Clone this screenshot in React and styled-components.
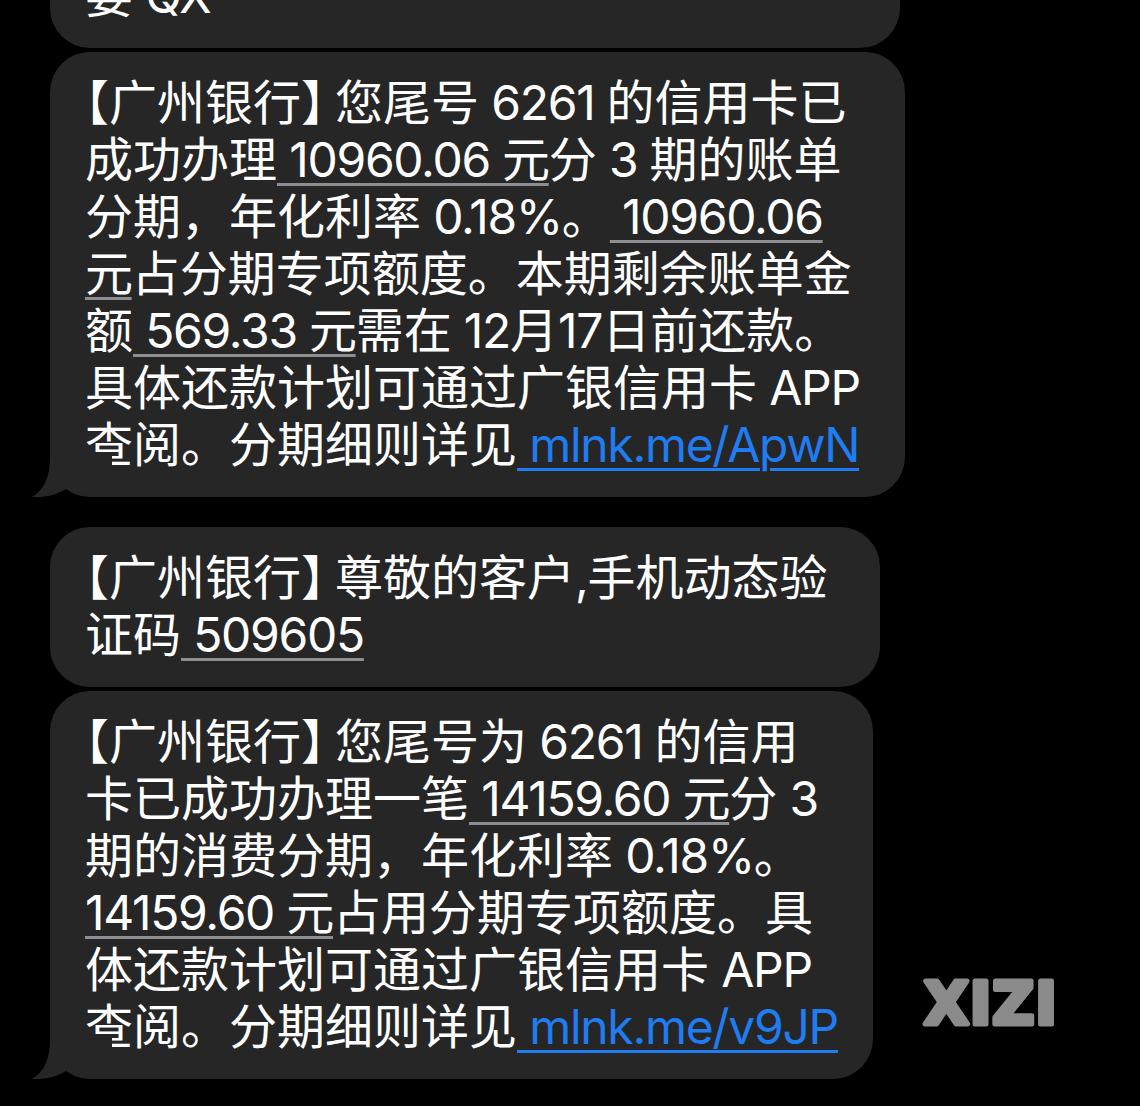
import React from "react";
import styled, { createGlobalStyle } from "styled-components";

const GlobalStyle = createGlobalStyle`
  html, body {
    margin: 0;
    padding: 0;
    background: #000000;
  }
  body {
    overflow: hidden;
  }
`;

const Screen = styled.div`
  position: relative;
  width: 1140px;
  height: 1106px;
  overflow: hidden;
  background: #000000;
  font-family: "Inter", "Noto Sans CJK SC", sans-serif;
`;

const Thread = styled.div`
  display: flex;
  flex-direction: column;
  align-items: flex-start;
  padding-left: 50px;
  margin-top: -55px;
`;

const Bubble = styled.div`
  position: relative;
  box-sizing: border-box;
  width: ${(p) => p.$width}px;
  margin-top: ${(p) => p.$gap || 0}px;
  padding: 22px 20px 24px 35px;
  background: #262626;
  border-radius: 40px;
  color: #ffffff;
  font-size: 48px;
  line-height: 57px;
  white-space: nowrap;
`;

const Tail = styled.svg`
  position: absolute;
  left: -18px;
  bottom: 0;
  width: 80px;
  height: 45px;
`;

const Bracket = styled.span`
  font-family: "Noto Sans CJK SC", sans-serif;
  font-feature-settings: "halt";
  line-height: 1;
  margin-right: ${(p) => p.$after || 0}px;
`;

// latin runs are a touch narrower than Inter's default
const L = styled.span`
  letter-spacing: -1.3px;
`;

const Data = styled(L)`
  text-decoration: underline;
  text-decoration-color: #8d8d92;
  text-decoration-thickness: 3px;
  text-underline-offset: 6px;
`;

const Link = styled(L)`
  color: #1f7cf1;
  text-decoration: underline;
  text-decoration-color: #1f7cf1;
  text-decoration-thickness: 3px;
  text-underline-offset: 6px;
`;

const Watermark = styled.svg`
  position: absolute;
  left: 918px;
  top: 970px;
  width: 150px;
  height: 64px;
`;

const Head = () => (
  <>
    <Bracket>【</Bracket>广州银行<Bracket $after={10}>】</Bracket>
  </>
);

const BubbleTail = () => (
  <Tail viewBox="0 0 80 45">
    <path
      d="M18 0 L18 5 C18 25 12 38 0 45 C14 46 26 42 34 37 C44 43 58 45 80 45 L80 0 Z"
      fill="#262626"
    />
  </Tail>
);

const App = () => {
  return (
    <Screen>
      <GlobalStyle />
      <Thread>
        <Bubble $width={850}>
          要<L> QX</L>
        </Bubble>

        <Bubble $width={855} $gap={4}>
          <Head />您尾号<L> 6261 </L>的信用卡已
          <br />
          成功办理<Data> 10960.06 元</Data>分<L> 3 </L>期的账单
          <br />
          分期，年化利率<L> 0.18%</L>。<Data> 10960.06</Data>
          <br />
          <Data>元</Data>占分期专项额度。本期剩余账单金
          <br />
          额<Data> 569.33 元</Data>需在<L> 12</L>月<L>17</L>日前还款。
          <br />
          具体还款计划可通过广银信用卡<L> APP</L>
          <br />
          查阅。分期细则详见<Link> mlnk.me/ApwN</Link>
          <BubbleTail />
        </Bubble>

        <Bubble $width={830} $gap={30}>
          <Head />尊敬的客户<L>,</L>手机动态验
          <br />
          证码<Data> 509605</Data>
        </Bubble>

        <Bubble $width={823} $gap={4}>
          <Head />您尾号为<L> 6261 </L>的信用
          <br />
          卡已成功办理一笔<Data> 14159.60 元</Data>分<L> 3</L>
          <br />
          期的消费分期，年化利率<L> 0.18%</L>。
          <br />
          <Data>14159.60 元</Data>占用分期专项额度。具
          <br />
          体还款计划可通过广银信用卡<L> APP</L>
          <br />
          查阅。分期细则详见<Link> mlnk.me/v9JP</Link>
          <BubbleTail />
        </Bubble>
      </Thread>

      <Watermark viewBox="0 0 150 64">
        <text
          x="6"
          y="54"
          fontFamily="DejaVu Sans, sans-serif"
          fontWeight="700"
          fontSize="58"
          fill="#8b8b8b"
          stroke="#8b8b8b"
          strokeWidth="5"
          strokeLinejoin="round"
          letterSpacing="1"
        >
          XIZI
        </text>
      </Watermark>
    </Screen>
  );
};

export default App;
